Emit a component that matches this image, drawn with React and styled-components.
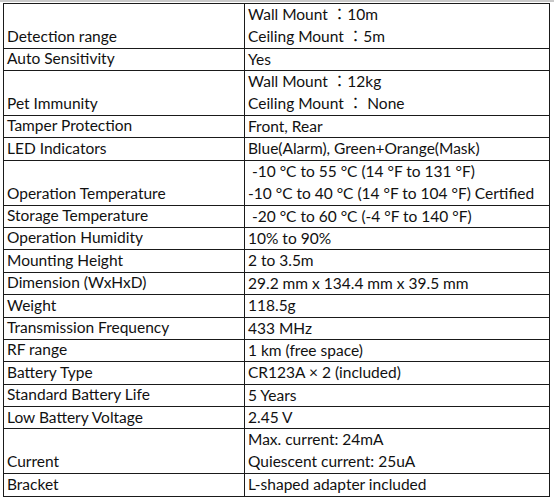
import React from "react";
import styled, { createGlobalStyle } from "styled-components";

const GlobalStyle = createGlobalStyle`
  body {
    margin: 0;
    background: #fff;
    font-family: Lato, "Noto Sans CJK TC", sans-serif;
    color: #111;
  }
`;

const UNIT = 22.4;

const Sheet = styled.div`
  width: 554px;
  height: 500px;
  border-top: 2px solid #c9c9c9;
  box-sizing: border-box;
  padding: 1px 0 0 3px;
`;

const Table = styled.div`
  display: grid;
  grid-template-columns: 241px 305px;
  border-top: 1px solid #1a1a1a;
  border-left: 1px solid #1a1a1a;
  width: 547px;
  box-sizing: border-box;
`;

const Cell = styled.div`
  box-sizing: border-box;
  height: ${({ $lines }) => `${$lines * UNIT}px`};
  border-right: 1px solid #1a1a1a;
  border-bottom: 1px solid #1a1a1a;
  padding: 0 3px;
  font-size: 15.5px;
  line-height: ${UNIT - 0.5}px;
  white-space: pre;
  overflow: hidden;
`;

const Label = styled(Cell)`
  display: flex;
  align-items: flex-end;
`;

const Value = styled(Cell)`
  display: flex;
  flex-direction: column;
  justify-content: flex-start;
`;

const specs = [
  ["Detection range", ["Wall Mount ：10m", "Ceiling Mount ：5m"]],
  ["Auto Sensitivity", ["Yes"]],
  ["Pet Immunity", ["Wall Mount ：12kg", "Ceiling Mount ： None"]],
  ["Tamper Protection", ["Front, Rear"]],
  ["LED Indicators", ["Blue(Alarm), Green+Orange(Mask)"]],
  [
    "Operation Temperature",
    [" -10 °C to 55 °C (14 °F to 131 °F)", "-10 °C to 40 °C (14 °F to 104 °F) Certified"],
  ],
  ["Storage Temperature", [" -20 °C to 60 °C (-4 °F to 140 °F)"]],
  ["Operation Humidity", ["10% to 90%"]],
  ["Mounting Height", ["2 to 3.5m"]],
  ["Dimension (WxHxD)", ["29.2 mm x 134.4 mm x 39.5 mm"]],
  ["Weight", ["118.5g"]],
  ["Transmission Frequency", ["433 MHz"]],
  ["RF range", ["1 km (free space)"]],
  ["Battery Type", ["CR123A × 2 (included)"]],
  ["Standard Battery Life", ["5 Years"]],
  ["Low Battery Voltage", ["2.45 V"]],
  ["Current", ["Max. current: 24mA", "Quiescent current: 25uA"]],
  ["Bracket", ["L-shaped adapter included"]],
];

export default function App() {
  return (
    <>
      <GlobalStyle />
      <Sheet>
        <Table>
          {specs.map(([name, values]) => (
            <React.Fragment key={name}>
              <Label $lines={values.length}>{name}</Label>
              <Value $lines={values.length}>
                {values.map((v) => (
                  <span key={v}>{v}</span>
                ))}
              </Value>
            </React.Fragment>
          ))}
        </Table>
      </Sheet>
    </>
  );
}
